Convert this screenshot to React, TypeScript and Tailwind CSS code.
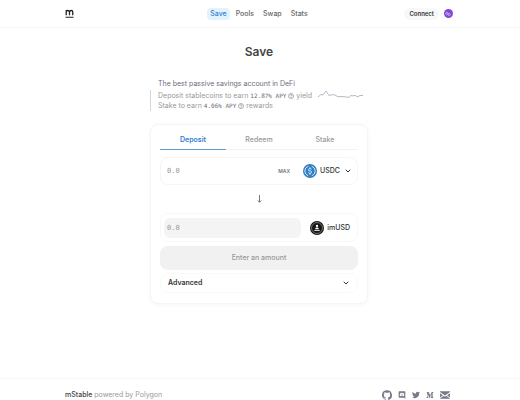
import { useState } from 'react'
import { clsx } from 'clsx'
import { ChevronDown } from 'lucide-react'

const navItems = ['Save', 'Pools', 'Swap', 'Stats']
const tabs = ['Deposit', 'Redeem', 'Stake']

function Logo() {
  return (
    <svg viewBox="0 0 18 18" className="size-[9px]" fill="none" stroke="#222" strokeWidth="2.6">
      <path d="M2.500 12.500V2M2.500 5q1-2 3.200-2T9 6v6.500M9 6q.5-3 3.500-3t3 3v6.500" />
      <path d="M1 16.500h16" strokeWidth="2" />
    </svg>
  )
}

function ClockIcon() {
  return (
    <svg viewBox="0 0 12 12" className="inline size-[6px] align-middle" fill="none" stroke="#8a8a94" strokeWidth="1.4">
      <circle cx="6" cy="6" r="5" />
      <path d="M4.4 4.8Q4.600 3.200 6 3.200T7.600 4.800Q7.500 5.600 6 6.400V7.400M6 8.400V9.600" />
    </svg>
  )
}

function UsdcIcon() {
  return (
    <svg viewBox="0 0 28 28" className="size-[14px]" fill="none">
      <circle cx="14" cy="14" r="14" fill="#2f7fc4" />
      <path d="M10.500 4.500a10 10 0 0 0 0 19M17.500 4.500a10 10 0 0 1 0 19" stroke="#cfe4f6" strokeWidth="2" />
      <path d="M17 11q-.5-2-3-2t-3 2.500 3 2.500 3 2.500-3 2.500-3-2M14 6.500V9M14 19v2.500" stroke="#e4f0fa" strokeWidth="1.800" />
    </svg>
  )
}

function ImusdIcon() {
  return (
    <svg viewBox="0 0 28 28" className="size-[14px]" fill="none">
      <circle cx="14" cy="14" r="14" fill="#161616" />
      <circle cx="14" cy="14" r="11" stroke="#aaa" strokeWidth="1.200" />
      <path d="M8.500 19h11" stroke="#fff" strokeWidth="1.600" />
      <path d="M10 16.500q.5-3 3-3.500h2q2.500.5 3 3.500z" fill="#fff" />
      <circle cx="14" cy="10" r="2.300" fill="#fff" />
    </svg>
  )
}

function Sparkline() {
  return (
    <svg viewBox="0 0 46 12" className="h-3 w-[46px]" fill="none" stroke="#b9b9c6" strokeWidth="1">
      <path d="M1 8l3-2.500 2 .5L9 2l3 4.500 3-.8 3 .3 3 1.800 4-.3 4 .5 3 .3 2-1.800 3 .5 1-1 2 2 3-1.500h3" />
    </svg>
  )
}

const socials = [
  {
    label: 'GitHub',
    size: 'size-[10px]',
    icon: (
      <path d="M12 .5a12 12 0 0 0-3.800 23.400c.6.1.8-.3.8-.6v-2.100c-3.300.7-4-1.400-4-1.400-.6-1.400-1.300-1.800-1.300-1.800-1.100-.7.1-.7.1-.7 1.200.1 1.800 1.200 1.800 1.200 1.100 1.800 2.800 1.300 3.500 1 .1-.8.4-1.300.8-1.600-2.700-.3-5.500-1.300-5.500-5.900 0-1.300.5-2.400 1.200-3.200-.1-.3-.5-1.500.1-3.200 0 0 1-.3 3.300 1.200a11.500 11.500 0 0 1 6 0c2.300-1.500 3.300-1.200 3.300-1.200.7 1.700.2 2.900.1 3.200.8.8 1.200 1.900 1.200 3.200 0 4.600-2.800 5.600-5.500 5.900.4.400.8 1.100.8 2.200v3.200c0 .3.200.7.8.6A12 12 0 0 0 12 .5z" />
    ),
  },
  {
    label: 'Discord',
    size: 'size-[8px]',
    icon: (
      <path fillRule="evenodd" d="M4 1h16q2 0 2 2v20l-4-3H4q-2 0-2-2V3q0-2 2-2zM7 6L5 14l3 2 1.500-2h5L16 16l3-2-2-8-3-.5-1 1h-2l-1-1zM9.500 9.500h1.500v2.500H9.500zM13 9.500h1.500v2.500H13z" />
    ),
  },
  {
    label: 'Twitter',
    size: 'size-[8px]',
    icon: (
      <path d="M24 4.600a10 10 0 0 1-2.800.8 5 5 0 0 0 2.100-2.700 10 10 0 0 1-3.100 1.200 4.900 4.900 0 0 0-8.400 4.500A14 14 0 0 1 1.700 3.100a4.900 4.900 0 0 0 1.500 6.600 5 5 0 0 1-2.200-.6 4.900 4.900 0 0 0 3.900 4.900 5 5 0 0 1-2.200.1 4.900 4.900 0 0 0 4.600 3.400A10 10 0 0 1 0 19.500 14 14 0 0 0 21.500 7a10 10 0 0 0 2.500-2.400z" />
    ),
  },
  {
    label: 'Medium',
    size: 'size-[8px]',
    icon: <path d="M2 3h6l4.500 10L17 3h5v2l-2 1v12l2 1v2h-8v-2l2-1V8l-5 13h-1L5 8v9l2.500 3v1H1v-1l2.500-3V6z" />,
  },
  {
    label: 'Email',
    size: 'size-[10px]',
    icon: <path d="M0 3h24v1.500L12 13 0 4.500zM0 7.500l7 5L0 18zM24 7.500l-7 5 7 5.500zM9 14l3 2 3-2 9 6.500V21H0v-.5z" />,
  },
]

export default function App() {
  const [tab, setTab] = useState('Deposit')

  return (
    <div className="flex min-h-screen flex-col bg-white font-['Inter',sans-serif] text-[7px] leading-[10px] text-[#333]">
      <header className="grid h-7 grid-cols-3 items-center border-b border-[#f7f7f7] pr-[67px] pl-[65px]">
        <a href="#" aria-label="mStable">
          <Logo />
        </a>
        <nav className="flex items-center justify-center gap-[3px]">
          {navItems.map(item => (
            <a
              key={item}
              href={`#${item.toLowerCase()}`}
              className={clsx(
                'rounded px-[3px] py-px font-medium',
                item === 'Save' ? 'bg-[#e3f3fd] text-[#2f80d0]' : 'text-[#666]'
              )}
            >
              {item}
            </a>
          ))}
        </nav>
        <div className="flex items-center justify-end gap-[5px]">
          <button className="rounded-md bg-[#f8f8f8] px-[5px] py-px text-[6px] font-semibold text-[#333]">
            Connect
          </button>
          <button aria-label="Network" className="flex size-[9px] items-center justify-center rounded-full bg-[#8247d5]">
            <svg viewBox="0 0 12 12" className="size-[6px]" fill="none" stroke="#e0d0fa" strokeWidth="1.300">
              <path d="M6 6L3.500 7.500 1.500 6V3.800L3.500 2.500 6 4v4l2.500 1.500 2-1.500V6L8.500 4.500z" />
            </svg>
          </button>
        </div>
      </header>

      <main className="flex-1 pr-[2px]">
        <div className="mx-auto w-full max-w-[218px]">
          <h1 className="pt-4 text-center text-[12px] leading-4 font-semibold text-[#444]">Save</h1>

          <section className="mt-[19px] flex items-center justify-between pr-[5px]">
            <div className="text-[#999]">
              <h2 className="pb-px pl-2 text-[#6f6a7a]">The best passive savings account in DeFi</h2>
              <div className="border-l border-[#d5d5da] pl-[7px]">
                <p className="pt-px">
                  Deposit stablecoins to earn{' '}
                  <span className="font-['DejaVu_Sans_Mono',monospace] text-[6px] text-[#6a6675]">12.87% APY</span> <ClockIcon /> yield
                </p>
                <p>
                  Stake to earn <span className="font-['DejaVu_Sans_Mono',monospace] text-[6px] text-[#6a6675]">4.06% APY</span>{' '}
                  <ClockIcon /> rewards
                </p>
              </div>
            </div>
            <Sparkline />
          </section>

          <section className="mt-[13px] rounded-lg border border-[#f5f5f5] px-[9px] pt-[5px] pb-[10px] shadow-[0_1px_4px_rgba(0,0,0,0.04)]">
            <div role="tablist" className="grid grid-cols-3 border-b border-[#f3f3f3]">
              {tabs.map(name => (
                <button
                  key={name}
                  role="tab"
                  aria-selected={tab === name}
                  onClick={() => setTab(name)}
                  className={clsx(
                    '-mb-px h-5 border-b',
                    tab === name ? 'border-[#5b9bd0] font-semibold text-[#2f80d0]' : 'border-transparent font-medium text-[#999]'
                  )}
                >
                  {name}
                </button>
              ))}
            </div>

            <div className="mt-[7px] flex h-7 items-center rounded-lg border border-[#f6f6f6] pr-[5px] pl-[3px]">
              <input
                aria-label="Amount to deposit"
                placeholder="0.0"
                className="min-w-0 flex-1 px-[3px] font-['DejaVu_Sans_Mono',monospace] text-[7px] outline-none placeholder:text-[#999]"
              />
              <button className="mr-[13px] text-[5px] font-semibold text-[#777]">MAX</button>
              <button className="flex items-center gap-[3px] font-medium">
                <UsdcIcon />
                USDC
                <ChevronDown className="ml-px size-2" strokeWidth={3} />
              </button>
            </div>

            <div className="flex h-7 items-center justify-center">
              <svg viewBox="0 0 10 16" className="h-2 w-[5px]" fill="none" stroke="#555" strokeWidth="1.600">
                <path d="M5 0v14M1.500 11L5 14.500 8.500 11" />
              </svg>
            </div>

            <div className="flex h-[29px] items-center rounded-lg border border-[#f8f8f8] pr-[7px] pl-[3px]">
              <input
                aria-label="Amount received"
                placeholder="0.0"
                readOnly
                className="mr-[9px] h-5 min-w-0 flex-1 rounded-md bg-[#f4f4f4] px-[3px] font-['DejaVu_Sans_Mono',monospace] text-[7px] outline-none placeholder:text-[#999]"
              />
              <div className="flex items-center gap-[3px] font-medium">
                <ImusdIcon />
                imUSD
              </div>
            </div>

            <button disabled className="mt-1 h-6 w-full rounded-lg bg-[#f1f1f1] font-medium text-[#999]">
              Enter an amount
            </button>

            <button
              aria-expanded="false"
              className="mt-[3px] flex h-5 w-full items-center justify-between rounded-lg border border-[#fafafa] px-[7px] font-semibold"
            >
              Advanced
              <ChevronDown className="size-2" strokeWidth={3} />
            </button>
          </section>
        </div>
      </main>

      <footer className="flex h-[22px] items-end justify-between border-t border-[#f7f7f7] px-[65px]">
        <p className="text-[#999]">
          <a href="#mstable" className="font-medium text-[#444]">mStable</a> powered by <a href="#polygon">Polygon</a>
        </p>
        <div className="flex h-[10px] items-center gap-[6px] pr-[5px]">
          {socials.map(social => (
            <a key={social.label} href={`#${social.label.toLowerCase()}`} aria-label={social.label}>
              <svg viewBox="0 0 24 24" className={social.size} fill="#777a8b">
                {social.icon}
              </svg>
            </a>
          ))}
        </div>
      </footer>
    </div>
  )
}
